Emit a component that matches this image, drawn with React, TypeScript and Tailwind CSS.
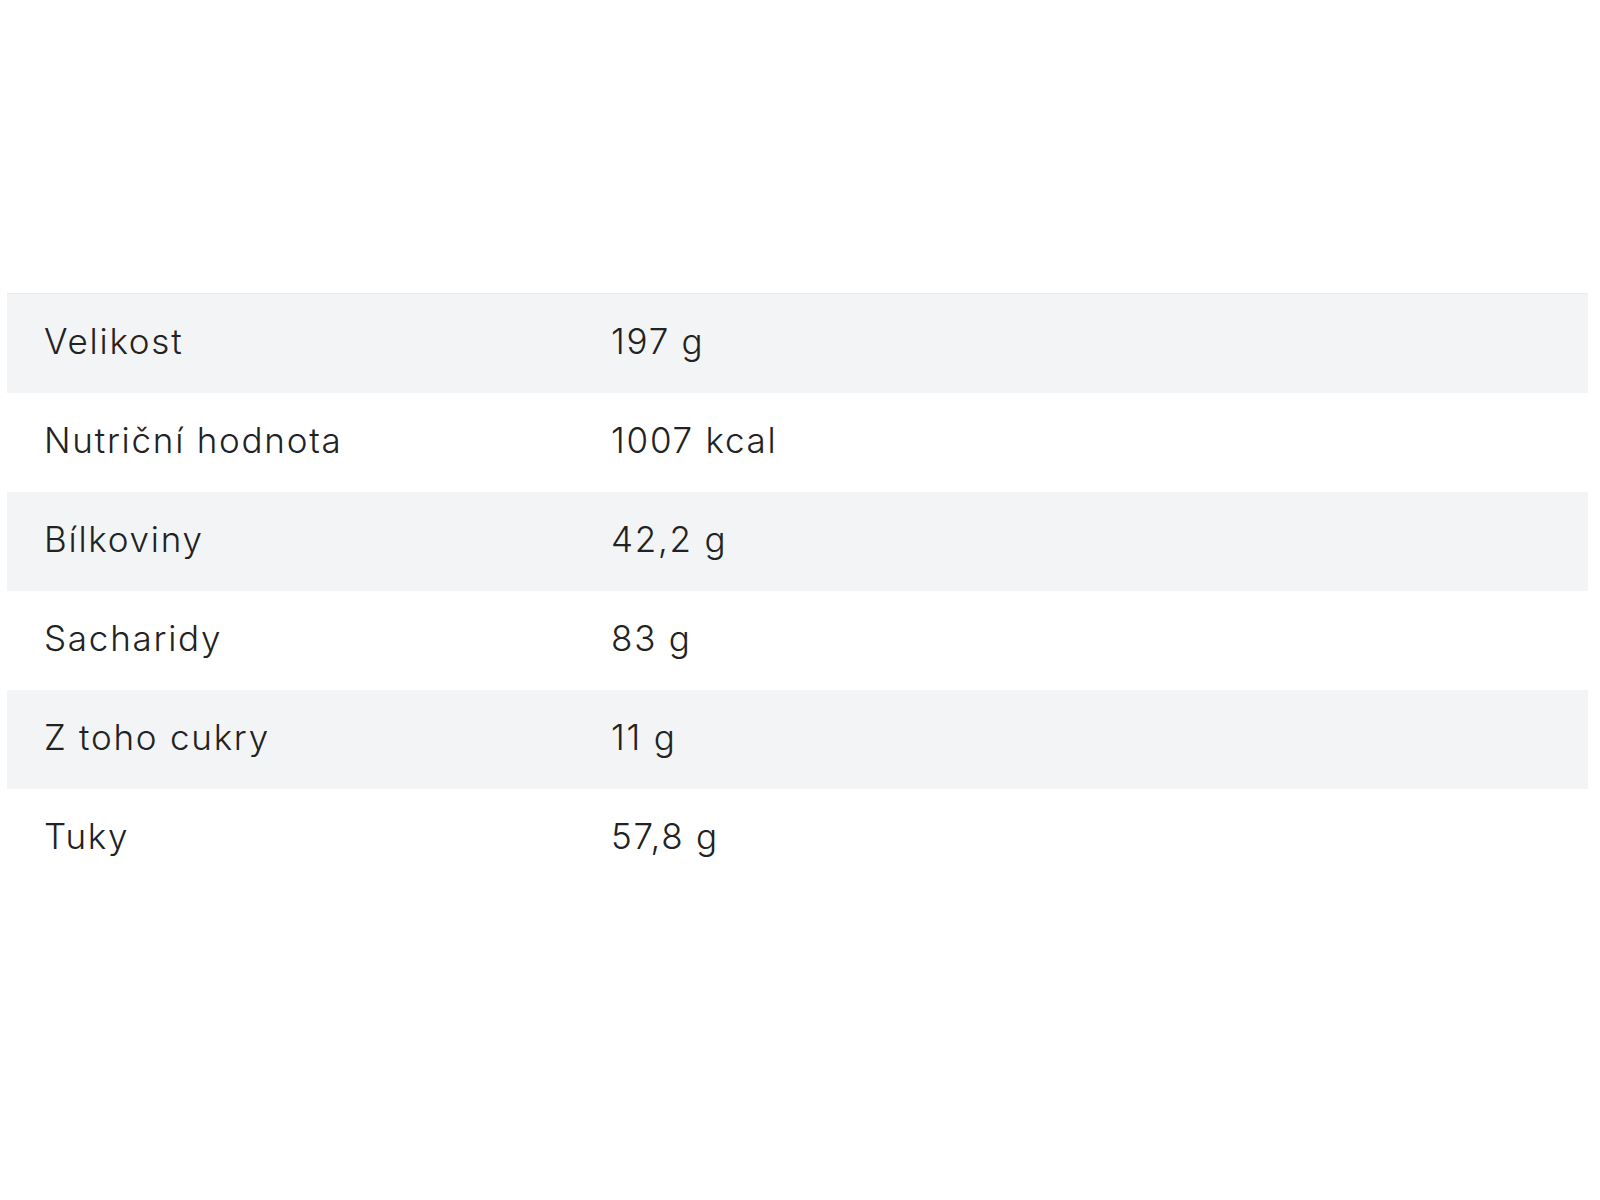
const rows: [string, string][] = [
  ['Velikost', '197 g'],
  ['Nutriční hodnota', '1007 kcal'],
  ['Bílkoviny', '42,2 g'],
  ['Sacharidy', '83 g'],
  ['Z toho cukry', '11 g'],
  ['Tuky', '57,8 g'],
];

export default function App() {
  return (
    <div className="min-h-[1200px] w-full bg-white pt-[293px] font-['Inter',sans-serif]">
      <div className="ml-[7px] mr-[12px] border-t border-[#ebebeb]">
        {rows.map(([label, value], i) => (
          <div
            key={label}
            className={`grid h-[99px] grid-cols-[604px_1fr] items-center pb-[5px] text-[35px] font-light tracking-[0.05em] text-[#222222] ${
              i % 2 === 0 ? 'bg-[#f3f4f5]' : 'bg-white'
            }`}
          >
            <div className="pl-[37px]">{label}</div>
            <div>{value}</div>
          </div>
        ))}
      </div>
    </div>
  );
}
